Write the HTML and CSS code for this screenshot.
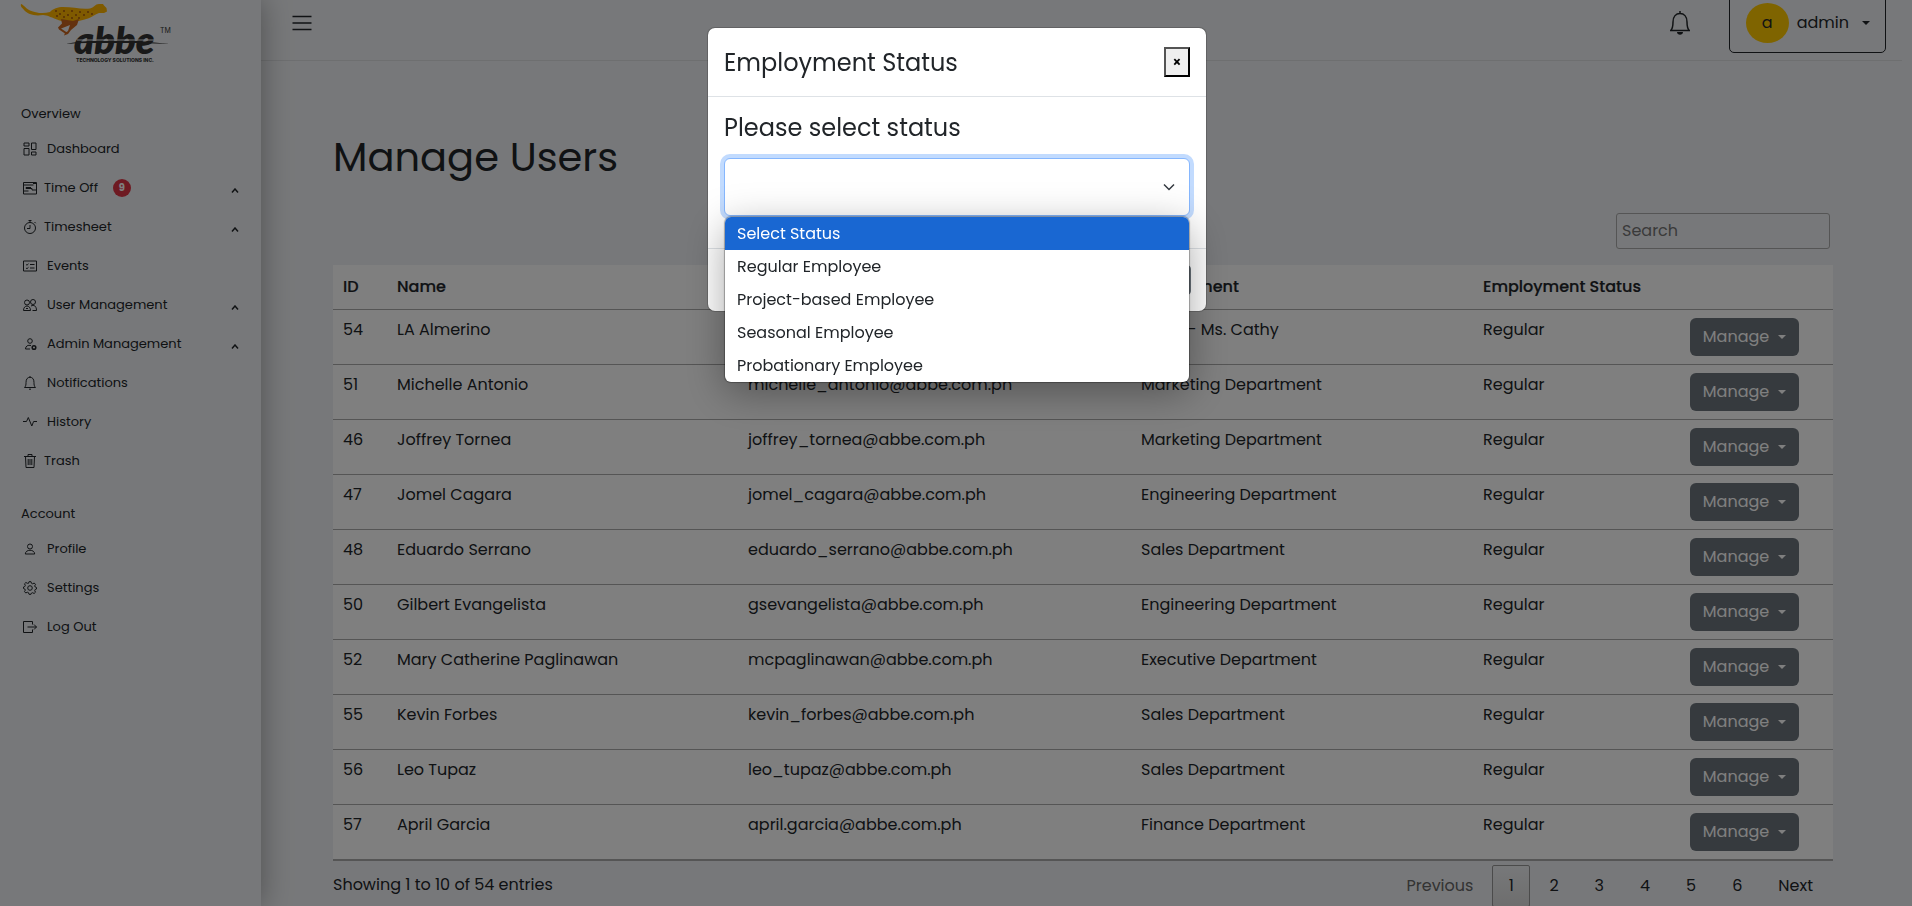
FILE: index.html
```html
<!DOCTYPE html>
<html lang="en">
<head>
<meta charset="utf-8">
<meta name="viewport" content="width=device-width, initial-scale=1">
<title>Manage Users</title>
<link rel="stylesheet" href="styles.css">
</head>
<body>
<div class="app">
  <aside class="sidebar">
    <a class="brand" href="#" aria-label="abbe Technology Solutions Inc.">
      <svg class="brand-logo" viewBox="0 0 154 64" width="154" height="64">
        <path fill="#ffb400" d="M1 4C3 4 5 8 10 10.500c6 2.500 13 3.500 20 1.500 3-3.500 8-5 13-5 10 0 18 2.500 27 1.500 4-1 5-4.500 9-4.500h4l1 1.500 2.500 2.500.5 3.500-3 1.500h-5c-4 1.500-7 4-11 5.500-6 2-11 2.500-15 4-7 0-11-1-16-3-8-3-9-4-14-4.500-9 1.500-15-1-19-5C3 8 0 7 1 4z"/>
        <path fill="#c8641e" d="M41 19l12 2 6-2-2 6-6 5-3 4-4 1.500 1-2.500 3-2 2-6-5 2-4 1.500 6 4-2 1-6-4-1-2 4-4z"/>
        <g fill="#a0500f"><circle cx="36" cy="11" r=".9"/><circle cx="40" cy="14" r=".9"/><circle cx="44" cy="11" r=".9"/><circle cx="48" cy="15" r=".9"/><circle cx="52" cy="11" r=".9"/><circle cx="56" cy="15" r=".9"/><circle cx="60" cy="12" r=".9"/><circle cx="64" cy="15" r=".9"/><circle cx="44" cy="17" r=".9"/><circle cx="52" cy="18" r=".9"/><circle cx="59" cy="18" r=".9"/><circle cx="68" cy="12" r=".9"/><circle cx="37" cy="16" r=".9"/><circle cx="72" cy="14" r=".9"/></g>
        <text class="logo-word" x="54" y="54">abbe</text>
        <path class="logo-cut" d="M57 40h78"/>
        <path fill="#333" d="M46 44Q58 41 74 41h45l31 3-30-1H76Q58 42.500 46 44z"/>
        <text class="logo-tm" x="140" y="33">TM</text>
        <text class="logo-tag" x="56" y="62">TECHNOLOGY SOLUTIONS INC.</text>
      </svg>
    </a>
    <nav class="menu">
      <h2 class="menu-title">Overview</h2>
      <a class="menu-item" href="#"><svg class="icon" viewBox="0 0 14 14"><path d="M1 1h5v3H1zM8.500 1H13v6.500H8.500zM1 6.500h5V13H1zM8.500 10H13v3H8.500z"/></svg><span>Dashboard</span></a>
      <a class="menu-item near" href="#"><svg class="icon" viewBox="0 0 14 14"><path d="M.5 1.500h13v11.500H.5zM.5 4h10M10 2.500h3M3 6.500h5M3 6.500v1h6V9h4M.5 10h5"/></svg><span>Time Off</span><span class="badge">9</span><svg class="chev" viewBox="0 0 8 5"><path d="M1 4.500 4 1l3 3.500"/></svg></a>
      <a class="menu-item near" href="#"><svg class="icon" viewBox="0 0 14 14"><circle cx="7" cy="8" r="5.500"/><path d="M5.500.5h3M7 .5v2M11.500 2l1.200 1.200M7 5v3.500H4"/></svg><span>Timesheet</span><svg class="chev" viewBox="0 0 8 5"><path d="M1 4.500 4 1l3 3.500"/></svg></a>
      <a class="menu-item" href="#"><svg class="icon" viewBox="0 0 14 14"><path d="M.5 2h13v10H.5zM3 5.500l1 .7L5.500 4.800M3 9l1 .7 1.500-1.400M7 5.500h4.500M7 9h4.500"/></svg><span>Events</span></a>
      <a class="menu-item" href="#"><svg class="icon" viewBox="0 0 14 14"><circle cx="4" cy="4.500" r="2.500"/><circle cx="10" cy="4" r="2.500"/><path d="M.5 12.500c0-6 7-6 7 0zM3 10.500h2M8 8c3-1.500 5.500 0 5.500 4.500h-4"/></svg><span>User Management</span><svg class="chev" viewBox="0 0 8 5"><path d="M1 4.500 4 1l3 3.500"/></svg></a>
      <a class="menu-item" href="#"><svg class="icon" viewBox="0 0 14 14"><circle cx="7" cy="4" r="2.300"/><path d="M8 8.500c-3-.8-5.500.5-5.500 3.500H7"/><circle cx="11" cy="10.500" r="1.800" stroke-width="1.500"/></svg><span>Admin Management</span><svg class="chev" viewBox="0 0 8 5"><path d="M1 4.500 4 1l3 3.500"/></svg></a>
      <a class="menu-item" href="#"><svg class="icon" viewBox="0 0 14 14"><path d="M1.500 11.500h11c-1.500-1.500-1.500-3-1.500-5C11 3 9.500 1.300 7 1.300S3 3 3 6.500c0 2 0 3.500-1.500 5zM7 0v1M6 13.200h2"/></svg><span>Notifications</span></a>
      <a class="menu-item" href="#"><svg class="icon" viewBox="0 0 14 14"><path d="M0 6.500h3.500L5.300 2.500l3.500 8.500 1.800-4.500H14"/></svg><span>History</span></a>
      <a class="menu-item near" href="#"><svg class="icon" viewBox="0 0 14 14"><path d="M1 2.500h12M5 2.500V.5h4v2M2.500 2.500l.5 11h8l.5-11M5.200 5v6M7 5v6M8.800 5v6"/></svg><span>Trash</span></a>
      <h2 class="menu-title second">Account</h2>
      <a class="menu-item" href="#"><svg class="icon" viewBox="0 0 14 14"><circle cx="7" cy="4.500" r="2.500"/><path d="M2.300 12c0-5 9.400-5 9.400 0z"/></svg><span>Profile</span></a>
      <a class="menu-item" href="#"><svg class="icon" viewBox="0 0 14 14"><circle cx="7" cy="7" r="2.300"/><path d="M6 .7h2l.5 1.600 1.200.5 1.500-.8 1.300 1.400-.8 1.500.5 1.100 1.300.5v1.500l-1.300.5-.5 1.200.8 1.500-1.400 1.300-1.500-.8-1.200.5L8 13.300H6l-.5-1.600-1.200-.5-1.500.8-1.300-1.400.8-1.500-.5-1.100L.5 7.500V6l1.300-.5.5-1.200-.8-1.500 1.400-1.300 1.500.8L5.500 2.300z"/></svg><span>Settings</span></a>
      <a class="menu-item" href="#"><svg class="icon" viewBox="0 0 14 14"><path d="M9.500 4.500v-3h-9v11h9v-3M4.500 7h9M11 4.500 13.500 7 11 9.500"/></svg><span>Log Out</span></a>
    </nav>
  </aside>

  <div class="page">
    <header class="topbar">
      <button class="icon-button" type="button" aria-label="Toggle menu"><svg width="20" height="16" viewBox="0 0 20 16"><path d="M.5 1.500h19M.5 8h19M.5 14.500h19"/></svg></button>
      <div class="topbar-right">
        <button class="icon-button" type="button" aria-label="Notifications"><svg width="20" height="24" viewBox="0 0 20 24"><path d="M.7 19.500h18.600c-2-2-2.300-4.500-2.300-8.500 0-5.500-3-8.500-7-8.500S3 5.500 3 11c0 4-.3 6.500-2.300 8.500zM10 0v2.500"/><path d="M7 21h6c0 3.600-6 3.600-6 0z" fill="currentColor" stroke="none"/></svg></button>
        <button class="account" type="button"><span class="avatar">a</span><span>admin</span><span class="caret"></span></button>
      </div>
    </header>

    <main class="content">
      <h1 class="title">Manage Users</h1>
      <div class="filter"><input class="search" type="search" placeholder="Search" aria-label="Search"></div>
      <table class="users">
        <colgroup><col class="c-id"><col class="c-name"><col class="c-mail"><col class="c-dept"><col class="c-status"><col></colgroup>
        <thead><tr><th>ID</th><th>Name</th><th>Email</th><th>Department</th><th>Employment Status</th><th></th></tr></thead>
        <tbody>
          <tr><td>54</td><td>LA Almerino</td><td>la_almerino@abbe.com.ph</td><td>Sales - Ms. Cathy</td><td>Regular</td><td><button class="manage" type="button">Manage<span class="caret"></span></button></td></tr>
          <tr><td>51</td><td>Michelle Antonio</td><td>michelle_antonio@abbe.com.ph</td><td>Marketing Department</td><td>Regular</td><td><button class="manage" type="button">Manage<span class="caret"></span></button></td></tr>
          <tr><td>46</td><td>Joffrey Tornea</td><td>joffrey_tornea@abbe.com.ph</td><td>Marketing Department</td><td>Regular</td><td><button class="manage" type="button">Manage<span class="caret"></span></button></td></tr>
          <tr><td>47</td><td>Jomel Cagara</td><td>jomel_cagara@abbe.com.ph</td><td>Engineering Department</td><td>Regular</td><td><button class="manage" type="button">Manage<span class="caret"></span></button></td></tr>
          <tr><td>48</td><td>Eduardo Serrano</td><td>eduardo_serrano@abbe.com.ph</td><td>Sales Department</td><td>Regular</td><td><button class="manage" type="button">Manage<span class="caret"></span></button></td></tr>
          <tr><td>50</td><td>Gilbert Evangelista</td><td>gsevangelista@abbe.com.ph</td><td>Engineering Department</td><td>Regular</td><td><button class="manage" type="button">Manage<span class="caret"></span></button></td></tr>
          <tr><td>52</td><td>Mary Catherine Paglinawan</td><td>mcpaglinawan@abbe.com.ph</td><td>Executive Department</td><td>Regular</td><td><button class="manage" type="button">Manage<span class="caret"></span></button></td></tr>
          <tr><td>55</td><td>Kevin Forbes</td><td>kevin_forbes@abbe.com.ph</td><td>Sales Department</td><td>Regular</td><td><button class="manage" type="button">Manage<span class="caret"></span></button></td></tr>
          <tr><td>56</td><td>Leo Tupaz</td><td>leo_tupaz@abbe.com.ph</td><td>Sales Department</td><td>Regular</td><td><button class="manage" type="button">Manage<span class="caret"></span></button></td></tr>
          <tr><td>57</td><td>April Garcia</td><td>april.garcia@abbe.com.ph</td><td>Finance Department</td><td>Regular</td><td><button class="manage" type="button">Manage<span class="caret"></span></button></td></tr>
        </tbody>
      </table>
      <div class="table-foot">
        <span>Showing 1 to 10 of 54 entries</span>
        <nav class="pager" aria-label="Pages">
          <a class="disabled" href="#">Previous</a><a class="current" href="#">1</a><a href="#">2</a><a href="#">3</a><a href="#">4</a><a href="#">5</a><a href="#">6</a><a href="#">Next</a>
        </nav>
      </div>
    </main>
  </div>
</div>

<div class="backdrop">
  <form class="modal" role="dialog" aria-labelledby="modal-title">
    <div class="modal-head">
      <h2 class="modal-title" id="modal-title">Employment Status</h2>
      <button class="close" type="button" aria-label="Close">×</button>
    </div>
    <div class="modal-body">
      <label class="modal-title" for="status">Please select status</label>
      <div class="select-wrap">
        <select class="select" id="status"><option></option></select>
        <svg class="select-arrow" viewBox="0 0 12 8"><path d="M1 1.500 6 6.500l5-5"/></svg>
        <ul class="options" role="listbox" aria-label="Status">
          <li class="option active" role="option">Select Status</li>
          <li class="option" role="option">Regular Employee</li>
          <li class="option" role="option">Project-based Employee</li>
          <li class="option" role="option">Seasonal Employee</li>
          <li class="option" role="option">Probationary Employee</li>
        </ul>
      </div>
    </div>
    <div class="modal-foot"><button class="save" type="submit">Save</button></div>
  </form>
</div>
</body>
</html>
```

FILE: styles.css
```css
* { box-sizing: border-box; }

body {
  margin: 0;
  height: 100vh;
  overflow: hidden;
  background: #eff1f4;
  color: #212529;
  font-family: Poppins, Inter, sans-serif;
  font-size: 16px;
  line-height: 24px;
}

button, input, select { font: inherit; color: inherit; }
h1, h2, ul { margin: 0; padding: 0; font-weight: 400; }
a { color: inherit; text-decoration: none; }
svg { fill: none; stroke: currentColor; flex: none; }

.app { display: flex; height: 100vh; overflow: hidden; }

/* Sidebar */
.sidebar {
  flex: none;
  width: 261px;
  background: #eff1f4;
  box-shadow: 0 0 28px rgba(0, 0, 0, .35);
  font-size: 13px;
  line-height: 20px;
  z-index: 1;
}
.brand { display: block; height: 104px; padding-left: 20px; }
.brand-logo { display: block; stroke: none; }
.logo-word { font: italic 800 38px Lato, sans-serif; fill: #333; }
.logo-cut { stroke: #eff1f4; stroke-width: 1; }
.logo-tm { font: 7px Inter, sans-serif; fill: #333; }
.logo-tag { font: 800 5px Inter, sans-serif; fill: #333; }

.menu { display: flex; flex-direction: column; padding: 0 22px 0 21px; }
.menu-title { font-size: 13px; line-height: 20px; padding-bottom: 5px; }
.menu-title.second { padding-top: 24px; }
.menu-item { display: flex; align-items: center; gap: 10px; height: 39px; padding-left: 2px; }
.menu-item.near { gap: 7px; }
.icon { width: 14px; height: 14px; }
.chev { width: 8px; height: 5px; margin: 6px 0 0 auto; stroke-width: 1.500; }
.badge {
  width: 18px;
  margin-left: 8px;
  border-radius: 9px;
  background: #dc3545;
  color: #fff;
  font-size: 10px;
  font-weight: 700;
  line-height: 18px;
  text-align: center;
}

/* Top bar */
.page { flex: 1; min-width: 0; }
.topbar {
  display: flex;
  justify-content: space-between;
  align-items: center;
  height: 61px;
  margin-right: 10px;
  padding: 0 16px 15px 31px;
  border-bottom: 1px solid #dcdee1;
}
.topbar-right { display: flex; align-items: center; gap: 39px; }
.icon-button { display: flex; padding: 0; border: 0; background: none; stroke-width: 1.500; }
.account {
  display: flex;
  align-items: center;
  gap: 8px;
  height: 60px;
  padding: 0 15px 0 16px;
  border: 1px solid #212529;
  border-radius: 5px;
  background: none;
}
.avatar { width: 43px; border-radius: 50%; background: #ffc800; line-height: 40px; }
.caret {
  display: inline-block;
  margin-left: 5px;
  border: 4px solid transparent;
  border-top-color: currentColor;
  border-bottom: 0;
}

/* Content */
.content { padding: 72px 79px 0 72px; }
.title { font-size: 40px; line-height: 48px; }
.filter { display: flex; justify-content: flex-end; padding: 32px 3px 16px 0; }
.search {
  width: 214px;
  height: 36px;
  padding: 0 5px 2px;
  border: 1px solid #aaa;
  border-radius: 3px;
  background: transparent;
}
.search::placeholder { color: #757575; opacity: 1; }

.users {
  width: 100%;
  table-layout: fixed;
  border-collapse: separate;
  border-spacing: 0;
  border-bottom: 1px solid #aaa;
  background: #fff;
}
.c-id { width: 54px; }
.c-name { width: 23.4%; }
.c-mail { width: 26.2%; }
.c-dept { width: 22.8%; }
.c-status { width: 13.8%; }
.users th { height: 45px; padding: 0 10px; border-bottom: 1px solid #aaa; text-align: left; font-weight: 500; -webkit-text-stroke: 0.2px currentColor; }
.users td { height: 55px; padding: 8px 10px; border-bottom: 1px solid #aaa; vertical-align: top; white-space: nowrap; }
.manage {
  display: flex;
  align-items: center;
  justify-content: center;
  gap: 4px;
  width: 109px;
  height: 38px;
  padding: 0;
  border: 0;
  border-radius: 6px;
  background: #6c757d;
  color: #fff;
}

.table-foot { display: flex; justify-content: space-between; align-items: flex-start; padding-top: 4px; }
.table-foot > span { padding-top: 8px; }
.pager { display: flex; gap: 2px; padding-right: 3px; }
.pager a { min-width: 38px; padding: 8px 16px; border: 1px solid transparent; border-radius: 2px; }
.pager .disabled { color: #666; }
.pager .current { padding: 8px 12px; border-color: #979797; background: linear-gradient(#eff1f4, #dcdcdc); text-align: center; }

/* Modal */
.backdrop { position: fixed; inset: 0; z-index: 10; padding: 27px 0 0 2px; background: rgba(0, 0, 0, .5); }
.modal {
  width: 500px;
  max-width: 100%;
  margin: 0 auto;
  border: 1px solid rgba(0, 0, 0, .18);
  border-radius: 8px;
  background: #fff;
  background-clip: padding-box;
}
.modal-head { display: flex; align-items: center; justify-content: space-between; height: 69px; padding: 0 16px; border-bottom: 1px solid #dee2e6; }
.modal-title { display: block; font-size: 24px; line-height: 29px; }
.close {
  width: 26px;
  height: 30px;
  padding: 0;
  border: 2px outset #000;
  background: #efefef;
  color: #000;
  font-size: 14px;
  font-weight: 600;
  line-height: 24px;
}
.modal-body { padding: 16px 16px 32px; }
.select-wrap { position: relative; margin-top: 16px; }
.select {
  display: block;
  width: 100%;
  height: 58px;
  border: 1px solid #86b7fe;
  border-radius: 6px;
  background: #fff;
  appearance: none;
  box-shadow: 0 0 0 4px #c2dbfe;
}
.select-arrow { position: absolute; right: 15px; top: 25px; width: 12px; height: 8px; stroke: #343a40; stroke-width: 1.500; }
.options {
  position: absolute;
  top: 100%;
  left: 1px;
  right: 1px;
  z-index: 2;
  overflow: hidden;
  margin-top: 1px;
  border-radius: 6px;
  background: #fff;
  box-shadow: 0 0 1px 1px rgba(0, 0, 0, .3), 0 10px 40px rgba(0, 0, 0, .35);
  list-style: none;
}
.option { padding: 0 12px; line-height: 33px; }
.option.active { background: #1967d2; color: #fff; }
.modal-foot { display: flex; justify-content: flex-end; padding: 16px 15px; border-top: 1px solid #dee2e6; }
.save { height: 30px; padding: 0 12px; border: 1px solid #6c757d; border-radius: 4px; background: #6c757d; color: #fff; }
```
